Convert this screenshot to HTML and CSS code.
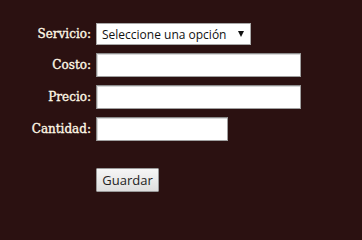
FILE: index.html
```html
<!DOCTYPE html>
<html lang="es">
<head>
<meta charset="utf-8">
<title>Producto</title>
<link rel="stylesheet" href="styles.css">
</head>
<body>
<form class="form">
  <label class="label" for="servicio">Servicio:</label>
  <span class="select-wrap">
    <select id="servicio" class="select">
      <option>Seleccione una opción</option>
    </select>
    <span class="arrow"></span>
  </span>
  <label class="label" for="costo">Costo:</label>
  <input id="costo" class="input input-wide" type="text">
  <label class="label" for="precio">Precio:</label>
  <input id="precio" class="input input-wide" type="text">
  <label class="label" for="cantidad">Cantidad:</label>
  <input id="cantidad" class="input input-short" type="text">
  <span class="spacer"></span>
  <button class="button" type="button">Guardar</button>
</form>
</body>
</html>
```

FILE: styles.css
```css
html, body {
  margin: 0;
  padding: 0;
  background: #2b1111;
  height: 100%;
}

.form {
  display: grid;
  grid-template-columns: 91px auto;
  column-gap: 5px;
  row-gap: 8px;
  justify-content: start;
  justify-items: start;
  align-items: center;
  padding-top: 23px;
}

.label {
  justify-self: end;
  font-family: "DejaVu Serif", serif;
  font-size: 12px;
  color: #fff8e6;
  -webkit-text-stroke: 0.35px #fff8e6;
}

.select-wrap {
  position: relative;
  display: block;
}

.select {
  appearance: none;
  -webkit-appearance: none;
  display: block;
  box-sizing: border-box;
  width: 155px;
  height: 22px;
  margin: 0;
  padding: 0 18px 0 5px;
  border: 1px solid #a8a8a8;
  border-radius: 0;
  background: #fff;
  font-family: "Open Sans", sans-serif;
  font-size: 12px;
  color: #111;
}

.arrow {
  position: absolute;
  right: 7px;
  top: 8px;
  width: 0;
  height: 0;
  border-left: 3px solid transparent;
  border-right: 3px solid transparent;
  border-top: 6px solid #111;
  pointer-events: none;
}

.input {
  display: block;
  box-sizing: border-box;
  height: 24px;
  margin: 0;
  padding: 1px 3px;
  border: 1px solid #a0a0a0;
  border-top-color: #8c8c8c;
  border-left-color: #8c8c8c;
  box-shadow: inset 1px 1px 0 #d8d8d8;
  background: #fff;
  font-family: "Open Sans", sans-serif;
  font-size: 13px;
}

.input-wide {
  width: 205px;
}

.input-short {
  width: 132px;
}

.spacer {
  display: block;
}

.button {
  margin-top: 19px;
  box-sizing: border-box;
  width: 63px;
  height: 24px;
  padding: 0;
  border: 1px solid #9a9a9a;
  border-radius: 1px;
  background: linear-gradient(#f6f6f6, #dedede);
  font-family: "Open Sans", sans-serif;
  font-size: 13px;
  color: #222;
}
```
